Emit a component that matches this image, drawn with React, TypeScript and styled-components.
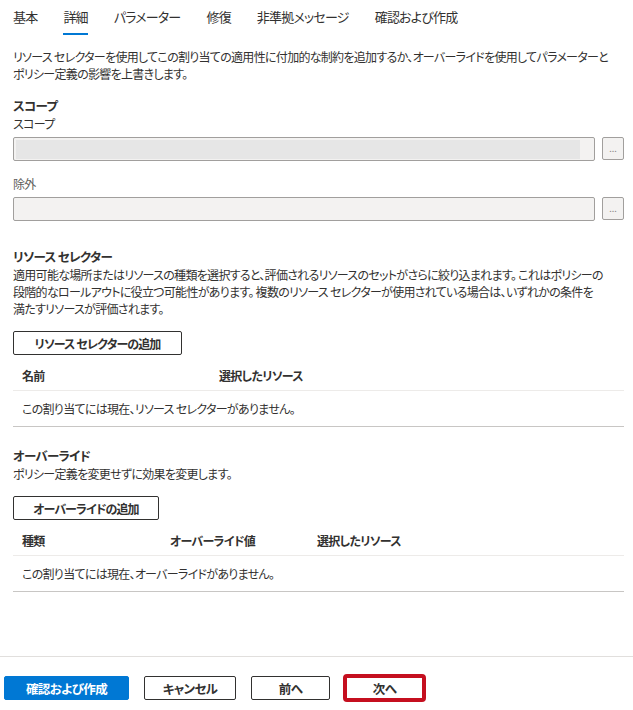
import React from "react"
import styled, { createGlobalStyle } from "styled-components"

const GlobalStyle = createGlobalStyle`
    html, body {
        margin: 0;
        padding: 0;
        background: #fff;
    }
    body {
        font-family: "Noto Sans CJK JP", "Noto Sans", sans-serif;
        font-feature-settings: "palt";
        font-size: 12px;
        letter-spacing: -0.7px;
        color: #323130;
    }
    * { box-sizing: border-box; }
`

const Page = styled.div`
    display: flex;
    flex-direction: column;
    min-height: 710px;
`

const Tabs = styled.nav`
    display: flex;
    gap: 26px;
    padding: 0 0 0 13px;
    height: 35px;
`

const Tab = styled.div<{ $active?: boolean }>`
    display: flex;
    align-items: center;
    font-size: 13px;
    letter-spacing: -0.8px;
    padding-bottom: 1px;
    border-bottom: 2px solid ${p => (p.$active ? "#0078d4" : "transparent")};
    color: #323130;
`

const Content = styled.main`
    display: flex;
    flex-direction: column;
    padding: 13px 9px 0 13px;
`

const Text = styled.p`
    margin: 0;
    line-height: 17px;
`

const Heading = styled.h3`
    margin: 0;
    font-size: 12.5px;
    font-weight: 700;
    line-height: 18px;
`

const Section = styled.section<{ $top: number }>`
    display: flex;
    flex-direction: column;
    margin-top: ${p => p.$top}px;
`

const Label = styled.label<{ $muted?: boolean }>`
    display: block;
    line-height: 18px;
    margin-bottom: 4px;
    color: ${p => (p.$muted ? "#605e5c" : "#323130")};
`

const FieldRow = styled.div`
    display: flex;
    gap: 7px;
    align-items: flex-start;
`

const InputBox = styled.div`
    flex: 1;
    height: 24px;
    border: 1px solid #a19f9d;
    border-radius: 2px;
    background: #f3f2f1;
    padding: 2px 14px 1px 2px;
`

const Skeleton = styled.div`
    height: 100%;
    background: #e6e6e6;
`

const DotsButton = styled.button`
    width: 22px;
    height: 23px;
    border: 1px solid #a19f9d;
    border-radius: 2px;
    background: #f3f2f1;
    color: #8a8886;
    font-size: 9px;
    letter-spacing: 0;
    padding: 0 0 4px;
    display: flex;
    align-items: flex-end;
    justify-content: center;
    font-family: inherit;
`

const Field = styled.div<{ $top?: number }>`
    margin-top: ${p => p.$top ?? 0}px;
`

const OutlineButton = styled.button<{ $w: number }>`
    width: ${p => p.$w}px;
    height: 24px;
    border: 1px solid #323130;
    border-radius: 2px;
    background: #fff;
    color: #323130;
    font-family: inherit;
    font-feature-settings: "palt";
    font-size: 12px;
    letter-spacing: -0.9px;
    font-weight: 700;
    padding: 0;
    align-self: flex-start;
`

const Table = styled.div`
    margin-top: 6px;
    border-bottom: 1px solid #c8c6c4;
`

const TableHead = styled.div<{ $cols: string }>`
    display: grid;
    grid-template-columns: ${p => p.$cols};
    height: 30px;
    align-items: center;
    padding-left: 9px;
    font-weight: 700;
    border-bottom: 1px solid #edebe9;
`

const TableRow = styled.div`
    height: 35px;
    display: flex;
    align-items: center;
    padding-left: 9px;
`

const Footer = styled.footer`
    margin-top: auto;
    border-top: 1px solid #e1dfdd;
    display: flex;
    gap: 15px;
    padding: 19px 0 10px 4px;
`

const FooterButton = styled.button<{ $w: number; $primary?: boolean; $flagged?: boolean }>`
    width: ${p => p.$w}px;
    height: 24px;
    border-radius: 2px;
    border: 1px solid ${p => (p.$primary ? "#0078d4" : "#323130")};
    background: ${p => (p.$primary ? "#0078d4" : "#fff")};
    color: ${p => (p.$primary ? "#fff" : "#323130")};
    font-family: inherit;
    font-feature-settings: "palt";
    font-size: 12.5px;
    letter-spacing: -0.6px;
    font-weight: 700;
    padding: 0;
    outline: ${p => (p.$flagged ? "4px solid #c50f1f" : "none")};
    outline-offset: -2px;
`

const tabs = ["基本", "詳細", "パラメーター", "修復", "非準拠メッセージ", "確認および作成"]

const App: React.FC = () => {
    return (
        <Page>
            <GlobalStyle />
            <Tabs>
                {tabs.map(t => (
                    <Tab key={t} $active={t === "詳細"}>{t}</Tab>
                ))}
            </Tabs>
            <Content>
                <Text>
                    リソース セレクターを使用してこの割り当ての適用性に付加的な制約を追加するか、オーバーライドを使用してパラメーターと<br />
                    ポリシー定義の影響を上書きします。
                </Text>

                <Section $top={15}>
                    <Heading>スコープ</Heading>
                    <Field>
                        <Label>スコープ</Label>
                        <FieldRow>
                            <InputBox><Skeleton /></InputBox>
                            <DotsButton>...</DotsButton>
                        </FieldRow>
                    </Field>
                    <Field $top={14}>
                        <Label $muted>除外</Label>
                        <FieldRow>
                            <InputBox />
                            <DotsButton>...</DotsButton>
                        </FieldRow>
                    </Field>
                </Section>

                <Section $top={27}>
                    <Heading>リソース セレクター</Heading>
                    <Text>
                        適用可能な場所またはリソースの種類を選択すると、評価されるリソースのセットがさらに絞り込まれます。 これはポリシーの<br />
                        段階的なロールアウトに役立つ可能性があります。 複数のリソース セレクターが使用されている場合は、いずれかの条件を<br />
                        満たすリソースが評価されます。
                    </Text>
                    <Section $top={14}>
                        <OutlineButton $w={169}>リソース セレクターの追加</OutlineButton>
                        <Table>
                            <TableHead $cols="197px 1fr">
                                <span>名前</span>
                                <span>選択したリソース</span>
                            </TableHead>
                            <TableRow>この割り当てには現在、リソース セレクターがありません。</TableRow>
                        </Table>
                    </Section>
                </Section>

                <Section $top={20}>
                    <Heading>オーバーライド</Heading>
                    <Text>ポリシー定義を変更せずに効果を変更します。</Text>
                    <Section $top={14}>
                        <OutlineButton $w={146}>オーバーライドの追加</OutlineButton>
                        <Table>
                            <TableHead $cols="148px 147px 1fr">
                                <span>種類</span>
                                <span>オーバーライド値</span>
                                <span>選択したリソース</span>
                            </TableHead>
                            <TableRow>この割り当てには現在、オーバーライドがありません。</TableRow>
                        </Table>
                    </Section>
                </Section>
            </Content>
            <Footer>
                <FooterButton $w={125} $primary>確認および作成</FooterButton>
                <FooterButton $w={92}>キャンセル</FooterButton>
                <FooterButton $w={79}>前へ</FooterButton>
                <FooterButton $w={79} $flagged>次へ</FooterButton>
            </Footer>
        </Page>
    )
}

export default App
